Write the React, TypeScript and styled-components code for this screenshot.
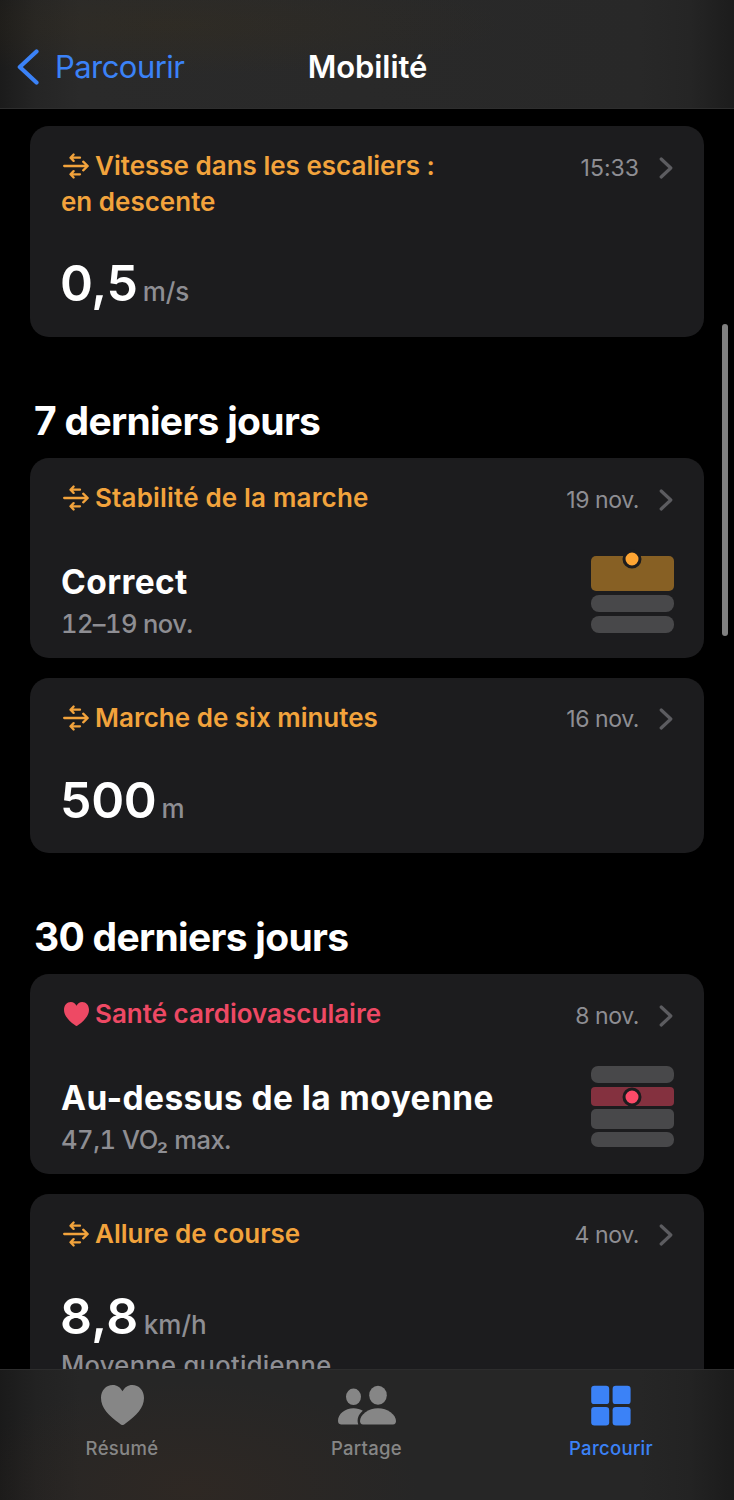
import React from "react";
import styled, { createGlobalStyle } from "styled-components";

const ORANGE = "#f2a33c";
const PINK = "#ee4964";
const BLUE = "#3b82f7";

const GlobalStyle = createGlobalStyle`
  * { box-sizing: border-box; }
  body {
    margin: 0;
    background: #000;
    font-family: Inter, "Liberation Sans", sans-serif;
    font-feature-settings: "calt" 0;
  }
`;

const Screen = styled.div`
  position: relative;
  width: 734px;
  height: 1500px;
  display: flex;
  flex-direction: column;
  overflow: hidden;
  background: #000;
`;

const NavBar = styled.header`
  flex: none;
  height: 109px;
  padding: 26px 16px 0 17px;
  display: grid;
  grid-template-columns: 1fr auto 1fr;
  align-items: center;
  border-bottom: 1px solid #2e2e2e;
  background:
    radial-gradient(ellipse 340px 50px at 170px 25px, rgba(60, 48, 24, 0.28), transparent),
    linear-gradient(90deg, #1b1b1b 0, #252525 36px, #2a2a2a 80px, #282828 640px, #252525 690px, #1c1c1c 734px);
`;

const BackLink = styled.a`
  display: flex;
  align-items: center;
  gap: 16px;
  color: ${BLUE};
  font-size: 31px;
  letter-spacing: -0.55px;
  line-height: 40px;
`;

const NavTitle = styled.h1`
  margin: 0;
  color: #fff;
  font-size: 31px;
  font-weight: 600;
  line-height: 40px;
  letter-spacing: -0.05px;
`;

const Content = styled.main`
  flex: 1;
  min-height: 0;
  overflow: hidden;
  padding: 17px 30px 0;
`;

const SectionTitle = styled.h2`
  margin: 59px 0 12px 4px;
  color: #fff;
  font-size: 39px;
  font-weight: 700;
  line-height: 50px;
  letter-spacing: -0.7px;
`;

const CardStack = styled.div`
  display: flex;
  flex-direction: column;
  gap: 19.5px;
`;

const CardBox = styled.article<{ $height: number }>`
  height: ${(p) => p.$height}px;
  padding: 22px 30px 0 31px;
  border-radius: 19px;
  background: #1c1c1e;
  display: flex;
  flex-direction: column;
`;

const CardHead = styled.div`
  display: flex;
  justify-content: space-between;
  align-items: flex-start;
`;

const CardTitle = styled.h3<{ $color: string; $tracking: number }>`
  margin: 0;
  color: ${(p) => p.$color};
  font-size: 26px;
  font-weight: 600;
  line-height: 36px;
  letter-spacing: ${(p) => p.$tracking}px;

  svg {
    vertical-align: -4px;
    margin: 0 6px 0 2px;
  }
`;

const Stamp = styled.div<{ $tracking: number }>`
  display: flex;
  align-items: center;
  gap: 20px;
  margin-right: 1px;
  padding-top: 1.5px;
  color: #8e8e93;
  font-size: 23px;
  letter-spacing: ${(p) => p.$tracking}px;
  line-height: 36px;
`;

const ValueRow = styled.div`
  display: flex;
  align-items: baseline;
  gap: 5px;
  margin: 32.7px 0 0 -1px;
  line-height: 60px;
`;

const Value = styled.span<{ $tracking: number }>`
  color: #fff;
  font-size: 50px;
  font-weight: 600;
  letter-spacing: ${(p) => p.$tracking}px;
`;

const Unit = styled.span`
  color: #8e8e93;
  font-size: 26px;
  font-weight: 500;
`;

const Note = styled.div<{ $tracking?: number; $shift?: number }>`
  margin-top: ${(p) => p.$shift ?? 0}px;
  color: #8e8e93;
  font-size: 25.5px;
  font-weight: 500;
  font-variant-numeric: tabular-nums;
  line-height: 36px;
  letter-spacing: ${(p) => p.$tracking ?? 0}px;
`;

const StatusRow = styled.div`
  display: flex;
  justify-content: space-between;
  margin-top: 39.5px;
`;

const Status = styled.div`
  margin-bottom: -1px;
  color: #fff;
  font-size: 33.5px;
  font-weight: 700;
  line-height: 50px;
  letter-spacing: 0.4px;
`;

const Gauge = styled.div<{ $top: number }>`
  width: 83px;
  margin-top: ${(p) => p.$top}px;
  display: flex;
  flex-direction: column;
  gap: 3.8px;
`;

const Level = styled.div<{ $height: number; $color?: string; $radius: number }>`
  position: relative;
  height: ${(p) => p.$height}px;
  border-radius: ${(p) => p.$radius}px;
  background: ${(p) => p.$color ?? "#48484a"};
`;

const Marker = styled.span<{ $color: string; $y: number }>`
  position: absolute;
  left: 41.3px;
  top: ${(p) => p.$y}px;
  width: 19px;
  height: 19px;
  transform: translate(-50%, -50%);
  border: 3.5px solid #1c1c1e;
  border-radius: 50%;
  background: ${(p) => p.$color};
`;

const ScrollThumb = styled.div`
  position: absolute;
  top: 324px;
  right: 6px;
  width: 6px;
  height: 312px;
  border-radius: 3px;
  background: #808080;
`;

const TabBar = styled.nav`
  flex: none;
  height: 131px;
  display: grid;
  grid-template-columns: 244px 245px 244px;
  border-top: 1px solid #2d2d2d;
  background:
    radial-gradient(ellipse 230px 110px at 190px 120px, rgba(64, 44, 30, 0.32), transparent),
    linear-gradient(90deg, #1a1a1a 0, #222 36px, #262626 80px, #262626 640px, #232323 690px, #1b1b1b 734px);
`;

const Tab = styled.a<{ $active?: boolean }>`
  display: flex;
  flex-direction: column;
  align-items: center;
  padding-top: 15px;
  gap: 11px;
  color: ${(p) => (p.$active ? BLUE : "#868686")};
  font-size: 18.5px;
  font-weight: 500;
  line-height: 24px;
  letter-spacing: 0.3px;
`;

const WalkIcon = () => (
  <svg width="26" height="26" viewBox="0 0 26 26" fill="none" stroke="currentColor" strokeWidth="2.3" strokeLinecap="round" strokeLinejoin="round">
    <path d="M1.2 13H24.5M20.200 8.700 24.700 13l-4.500 4.300" />
    <path d="M17 4.700H7.800M10.600 1.500 7.500 4.700l3.100 3.200" />
    <path d="M17 21.300H7.800M10.600 18.100 7.500 21.300l3.100 3.200" />
  </svg>
);

const HeartIcon = ({ width, height }: { width: number; height: number }) => (
  <svg width={width} height={height} viewBox="0 0 43 40" preserveAspectRatio="none" fill="currentColor">
    <path d="M21.500 40C20.900 40 19.800 39.300 18.600 38.400 7.500 30.800 0 22.500 0 13 0 5.400 5 0 11.800 0 16 0 19.500 2.300 21.500 6.300 23.500 2.300 27 0 31.200 0 38 0 43 5.400 43 13 43 22.500 35.500 30.800 24.400 38.400 23.200 39.300 22.100 40 21.500 40Z" />
  </svg>
);

const SmallHeart = styled.span`
  margin-left: 1px;

  svg {
    vertical-align: -3px;
  }
`;

const Chevron = () => (
  <svg width="14" height="22" viewBox="0 0 14 22" fill="none" stroke="#5c5c60" strokeWidth="3.2" strokeLinecap="round" strokeLinejoin="round">
    <path d="M2.200 2 11.800 11 2.200 20" />
  </svg>
);

const BackIcon = () => (
  <svg width="22" height="36" viewBox="0 0 22 36" fill="none" stroke="currentColor" strokeWidth="4.2" strokeLinecap="round" strokeLinejoin="round">
    <path d="M19.500 2.500 2.800 18l16.700 15.500" />
  </svg>
);

const PeopleIcon = () => (
  <svg width="58" height="40" viewBox="0 0 58 40" fill="currentColor">
    <ellipse cx="15.500" cy="11.800" rx="7.500" ry="8.300" />
    <ellipse cx="40" cy="10.200" rx="8.800" ry="9.500" />
    <path d="M24.800 25.800C22.500 24 19 23.200 15.500 23.200 7 23.200 0 29 0 35.800 0 38 1 39.400 3 39.400H20.300C18.500 34.500 20.500 29.300 24.800 25.800Z" />
    <path d="M40 23.200C49.500 23.200 58 29.500 58 36 58 38 57 39.400 55 39.400H25C23 39.400 22 38 22 36 22 29.500 30.500 23.200 40 23.200Z" />
  </svg>
);

const GridIcon = () => (
  <svg width="40" height="41" viewBox="0 0 40 41" fill="currentColor">
    <rect x="0.200" y="0.800" width="18" height="18.300" rx="3.200" />
    <rect x="21.600" y="0.800" width="18" height="18.300" rx="3.200" />
    <rect x="0.200" y="22.100" width="18" height="18.300" rx="3.200" />
    <rect x="21.600" y="22.100" width="18" height="18.300" rx="3.200" />
  </svg>
);

const GridSlot = styled.span`
  display: flex;
  margin-bottom: -1px;
`;

type CardProps = {
  height: number;
  title: React.ReactNode;
  stamp: string;
  stampTracking?: number;
  tracking?: number;
  heart?: boolean;
  children: React.ReactNode;
};

const Card = ({ height, title, stamp, stampTracking = -0.4, tracking = 0, heart, children }: CardProps) => (
  <CardBox $height={height}>
    <CardHead>
      <CardTitle $color={heart ? PINK : ORANGE} $tracking={tracking}>
        {heart ? (
          <SmallHeart>
            <HeartIcon width={25} height={24} />
          </SmallHeart>
        ) : (
          <WalkIcon />
        )}
        {title}
      </CardTitle>
      <Stamp $tracking={stampTracking}>
        {stamp}
        <Chevron />
      </Stamp>
    </CardHead>
    {children}
  </CardBox>
);

const Reading = ({ value, unit, tracking = -0.3 }: { value: string; unit: string; tracking?: number }) => (
  <ValueRow>
    <Value $tracking={tracking}>{value}</Value>
    <Unit>{unit}</Unit>
  </ValueRow>
);

export default function App() {
  return (
    <>
      <GlobalStyle />
      <Screen>
        <NavBar>
          <BackLink>
            <BackIcon />
            Parcourir
          </BackLink>
          <NavTitle>Mobilité</NavTitle>
        </NavBar>
        <Content>
          <Card
            height={211}
            title={<>Vitesse dans les escaliers :<br />en descente</>}
            stamp="15:33"
            stampTracking={0}
          >
            <Reading value="0,5" unit="m/s" />
          </Card>

          <SectionTitle>7 derniers jours</SectionTitle>
          <CardStack>
            <Card height={200} title="Stabilité de la marche" stamp="19 nov." tracking={0.18}>
              <StatusRow>
                <div>
                  <Status>Correct</Status>
                  <Note $tracking={-0.6}>12–19 nov.</Note>
                </div>
                <Gauge $top={-0.7}>
                  <Level $height={34.5} $radius={5} $color="#876024">
                    <Marker $color="#fea533" $y={2.7} />
                  </Level>
                  <Level $height={17.3} $radius={8} />
                  <Level $height={17.5} $radius={8} />
                </Gauge>
              </StatusRow>
            </Card>
            <Card height={175.5} title="Marche de six minutes" stamp="16 nov.">
              <Reading value="500" unit="m" />
            </Card>
          </CardStack>

          <SectionTitle>30 derniers jours</SectionTitle>
          <CardStack>
            <Card height={200} title="Santé cardiovasculaire" stamp="8 nov." heart>
              <StatusRow>
                <div>
                  <Status>Au-dessus de la moyenne</Status>
                  <Note $tracking={-0.45}>47,1 VO₂ max.</Note>
                </div>
                <Gauge $top={-7.3}>
                  <Level $height={17} $radius={7} />
                  <Level $height={19} $radius={4} $color="#84313f">
                    <Marker $color="#fb4a68" $y={10.4} />
                  </Level>
                  <Level $height={19.3} $radius={5} />
                  <Level $height={15} $radius={7} />
                </Gauge>
              </StatusRow>
            </Card>
            <Card height={230} title="Allure de course" stamp="4 nov.">
              <Reading value="8,8" unit="km/h" tracking={0.4} />
              <Note $shift={-7.5} $tracking={0.33}>Moyenne quotidienne</Note>
            </Card>
          </CardStack>
        </Content>
        <TabBar>
          <Tab>
            <HeartIcon width={43} height={40} />
            Résumé
          </Tab>
          <Tab>
            <PeopleIcon />
            Partage
          </Tab>
          <Tab $active>
            <GridSlot>
              <GridIcon />
            </GridSlot>
            Parcourir
          </Tab>
        </TabBar>
        <ScrollThumb />
      </Screen>
    </>
  );
}
